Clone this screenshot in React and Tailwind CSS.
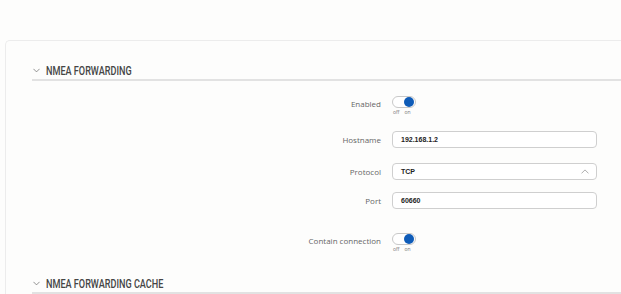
import React from "react";

function Chevron({ up = false, className = "" }) {
  return (
    <svg viewBox="0 0 10 6" className={className} fill="none" stroke="currentColor" strokeWidth="1" strokeLinecap="round" strokeLinejoin="round">
      {up ? <path d="M1 5 L5 1 L9 5" /> : <path d="M1 1 L5 5 L9 1" />}
    </svg>
  );
}

function Heading({ children }) {
  return (
    <div className="flex items-center h-[19px] border-b-[2px] border-[#e2e2e2]">
      <Chevron className="w-[7px] h-[5px] text-[#666] ml-[1px] mr-[6px] shrink-0" />
      <span
        className="text-[13px] font-medium text-[#454545] leading-none whitespace-nowrap inline-block origin-left scale-x-[0.7]"
        style={{ fontFamily: 'Roboto, "Liberation Sans", Arial, sans-serif' }}
      >
        {children}
      </span>
    </div>
  );
}

function Label({ children }) {
  return (
    <div
      className="w-[349px] text-right text-[8px] text-[#666] leading-none"
      style={{ fontFamily: '"Open Sans", "Noto Sans", sans-serif' }}
    >
      {children}
    </div>
  );
}

function Toggle() {
  return (
    <div className="flex flex-col items-start">
      <div className="w-[24px] h-[12px] rounded-full border border-[#c9c9c9] bg-white flex items-center justify-end pr-[1px]">
        <div className="w-[10px] h-[10px] rounded-full bg-[#0f5cb8]" />
      </div>
      <div
        className="flex gap-[5px] text-[5px] text-[#777] mt-[2px] ml-[1px] leading-none"
        style={{ fontFamily: '"Open Sans", "Noto Sans", sans-serif' }}
      >
        <span>off</span>
        <span>on</span>
      </div>
    </div>
  );
}

function Input({ value, select }) {
  return (
    <div className="w-[205px] h-[17px] rounded-[4px] border border-[#cfcfcf] bg-white flex items-center pl-[8px] pr-[7px] justify-between">
      <span
        className="text-[7px] text-[#222] font-semibold leading-none"
        style={{ fontFamily: '"Liberation Sans", Arial, sans-serif' }}
      >
        {value}
      </span>
      {select && <Chevron up className="w-[8px] h-[5px] text-[#999]" />}
    </div>
  );
}

export default function App() {
  return (
    <div className="w-[621px] h-[294px] bg-[#fdfdfc] overflow-hidden pt-[40px] pl-[5px]">
      <div className="border-l border-t border-[#ececec] rounded-tl-[5px] h-[300px] pl-[26px] pt-[21px]">
        <Heading>NMEA FORWARDING</Heading>

        <div className="flex items-start mt-[15px] gap-[11px]">
          <div className="pt-[4px]"><Label>Enabled</Label></div>
          <Toggle />
        </div>

        <div className="flex items-center mt-[16px] gap-[11px]">
          <Label>Hostname</Label>
          <Input value="192.168.1.2" />
        </div>

        <div className="flex items-center mt-[15px] gap-[11px]">
          <Label>Protocol</Label>
          <Input value="TCP" select />
        </div>

        <div className="flex items-center mt-[12px] gap-[11px]">
          <Label>Port</Label>
          <Input value="60660" />
        </div>

        <div className="flex items-start mt-[24px] gap-[11px]">
          <div className="pt-[4px]"><Label>Contain connection</Label></div>
          <Toggle />
        </div>

        <div className="mt-[23px]">
          <Heading>NMEA FORWARDING CACHE</Heading>
        </div>
      </div>
    </div>
  );
}
